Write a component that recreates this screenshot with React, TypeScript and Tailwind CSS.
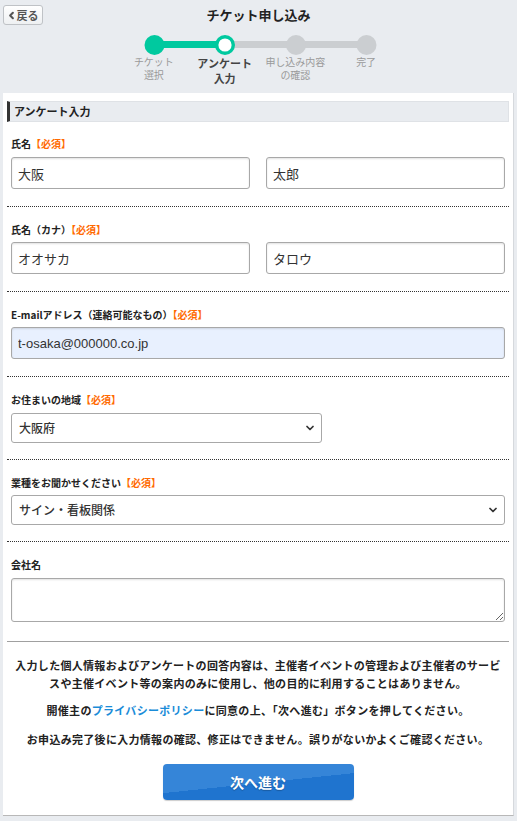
import { ChevronDown, ChevronLeft } from "lucide-react";

const font = { fontFamily: '"Noto Sans CJK JP", "Noto Sans", sans-serif' };
const inputFont = { fontFamily: '"Liberation Sans", "Noto Sans CJK JP", sans-serif' };

function Req() {
  return <span className="text-[#ff6a00]">【必須】</span>;
}

function Label({ children }: { children: React.ReactNode }) {
  return <div className="text-[10px] font-bold leading-[12px] text-[#222]">{children}</div>;
}

const inputBase =
  "h-[32px] w-full rounded-[3px] border border-[#a8a8a8] px-[6px] text-[13px] text-[#333] shadow-[inset_0_1px_2px_rgba(0,0,0,0.12)] outline-none";
const inputCls = `${inputBase} bg-white`;

function Select({ value, options, widthCls }: { value: string; options: string[]; widthCls: string }) {
  return (
    <div className={`relative ${widthCls}`}>
      <select
        defaultValue={value}
        className="h-[30px] w-full appearance-none rounded-[3px] border border-[#a8a8a8] bg-white pl-[7px] pr-6 text-[12px] font-medium text-[#333] outline-none"
        style={font}
      >
        {options.map((o) => (
          <option key={o}>{o}</option>
        ))}
      </select>
      <ChevronDown className="pointer-events-none absolute right-[6px] top-[9px] h-[12px] w-[12px] text-[#333]" strokeWidth={3.5} />
    </div>
  );
}

const steps = [
  { lines: ["チケット", "選択"], active: false },
  { lines: ["アンケート", "入力"], active: true },
  { lines: ["申し込み内容", "の確認"], active: false },
  { lines: ["完了"], active: false },
];

export default function App() {
  return (
    <div className="min-h-screen bg-[#e9ecf0]" style={font}>
      {/* header */}
      <div className="grid grid-cols-[1fr_auto_1fr] items-start px-[3px] pt-[5px]">
        <div>
          <button className="flex h-[20px] w-[40px] items-center justify-center rounded-[3px] border border-[#bfc2c6] bg-gradient-to-b from-white to-[#eef0f2] text-[11px] font-bold text-[#555]">
            <ChevronLeft className="-ml-[2px] h-[11px] w-[11px]" strokeWidth={4.5} />
            戻る
          </button>
        </div>
        <h1 className="pt-[1px] text-[13px] font-bold leading-[18px] text-[#222]">チケット申し込み</h1>
        <div />
      </div>

      {/* steps */}
      <div className="mt-[10px] flex flex-col items-center pl-[3px]">
        <svg width="283" height="20" viewBox="0 0 283 20" className="block">
          <line x1="35.5" y1="9.5" x2="106" y2="9.5" stroke="#00c99f" strokeWidth="7" />
          <line x1="106" y1="9.5" x2="247.5" y2="9.5" stroke="#cbced1" strokeWidth="7" />
          <circle cx="35.5" cy="10" r="10" fill="#00c99f" />
          <circle cx="177" cy="10" r="10" fill="#cbced1" />
          <circle cx="247.5" cy="10" r="10" fill="#cbced1" />
          <circle cx="106" cy="10" r="8.3" fill="#fff" stroke="#00c99f" strokeWidth="3.4" />
        </svg>
        <div className="mt-[1px] grid w-[283px] grid-cols-4 items-start">
          {steps.map((s, i) => (
            <div
              key={i}
              className={
                s.active
                  ? "text-center text-[11px] font-bold leading-[15px] text-[#444]"
                  : "-mt-[1px] text-center text-[10px] leading-[13px] text-[#9a9a9a]"
              }
            >
              {s.lines.map((l) => (
                <div key={l}>{l}</div>
              ))}
            </div>
          ))}
        </div>
      </div>

      {/* panel */}
      <div className="mx-[3px] mt-[7px] border-r border-b border-r-[#d6d9dd] border-b-[#b8b8b8] bg-white px-[4px] pt-[8px]">
        <div className="flex h-[21px] items-center border border-[#dfe2e6] border-l-[3px] border-l-[#333] bg-[#e9ecf0] pl-[4px] text-[11px] font-bold text-[#222]">
          アンケート入力
        </div>

        <div className="border-b border-dotted border-[#333] px-[4px] pt-[16px] pb-[17px]">
          <Label>
            氏名
            <Req />
          </Label>
          <div className="mt-[7px] flex gap-[16px]">
            <input className={inputCls} defaultValue="大阪" style={font} />
            <input className={inputCls} defaultValue="太郎" style={font} />
          </div>
        </div>

        <div className="border-b border-dotted border-[#333] px-[4px] pt-[17px] pb-[17px]">
          <Label>
            氏名（カナ）
            <Req />
          </Label>
          <div className="mt-[6px] flex gap-[16px]">
            <input className={inputCls} defaultValue="オオサカ" style={font} />
            <input className={inputCls} defaultValue="タロウ" style={font} />
          </div>
        </div>

        <div className="border-b border-dotted border-[#333] px-[4px] pt-[17px] pb-[17px]">
          <Label>
            E-mailアドレス（連絡可能なもの）
            <Req />
          </Label>
          <input
            className={`${inputBase} mt-[6px] bg-[#e8f0fe]`}
            defaultValue="t-osaka@000000.co.jp"
            style={inputFont}
          />
        </div>

        <div className="border-b border-dotted border-[#333] px-[4px] pt-[17px] pb-[16px]">
          <Label>
            お住まいの地域
            <Req />
          </Label>
          <div className="mt-[7px]">
            <Select value="大阪府" options={["大阪府", "東京都", "京都府"]} widthCls="w-[311px]" />
          </div>
        </div>

        <div className="border-b border-dotted border-[#333] px-[4px] pt-[17px] pb-[16px]">
          <Label>
            業種をお聞かせください
            <Req />
          </Label>
          <div className="mt-[6px]">
            <Select value="サイン・看板関係" options={["サイン・看板関係", "印刷関係", "その他"]} widthCls="w-full" />
          </div>
        </div>

        <div className="border-b border-[#a0a0a0] px-[4px] pt-[17px] pb-[19px]">
          <Label>会社名</Label>
          <textarea
            className="mt-[7px] block h-[44px] w-full rounded-[3px] border border-[#a8a8a8] bg-white px-[6px] text-[13px] shadow-[inset_0_1px_2px_rgba(0,0,0,0.12)] outline-none"
            style={font}
          />
        </div>

        <div className="px-[6px] pt-[14px] pb-[15px] text-center text-[11px] font-bold leading-[18px] tracking-[0.3px] text-[#222]">
          <p>
            入力した個人情報およびアンケートの回答内容は、主催者イベントの管理および主催者のサービスや主催イベント等の案内のみに使用し、他の目的に利用することはありません。
          </p>
          <p className="mt-[9px]">
            開催主の<span className="text-[#1a8cd8]">プライバシーポリシー</span>に同意の上、「次へ進む」ボタンを押してください。
          </p>
          <p className="mt-[11px]">
            お申込み完了後に入力情報の確認、修正はできません。誤りがないかよくご確認ください。
          </p>
          <div className="mt-[16px] flex justify-center">
            <button className="h-[36px] w-[191px] rounded-[4px] bg-[linear-gradient(174deg,#3585d8_52%,#1f74cf_52%)] text-[14px] font-bold tracking-normal text-white shadow-[0_1px_1px_rgba(0,0,0,0.2)] [text-shadow:0_1px_1px_rgba(0,0,0,0.25)]">
              次へ進む
            </button>
          </div>
        </div>
      </div>
    </div>
  );
}
